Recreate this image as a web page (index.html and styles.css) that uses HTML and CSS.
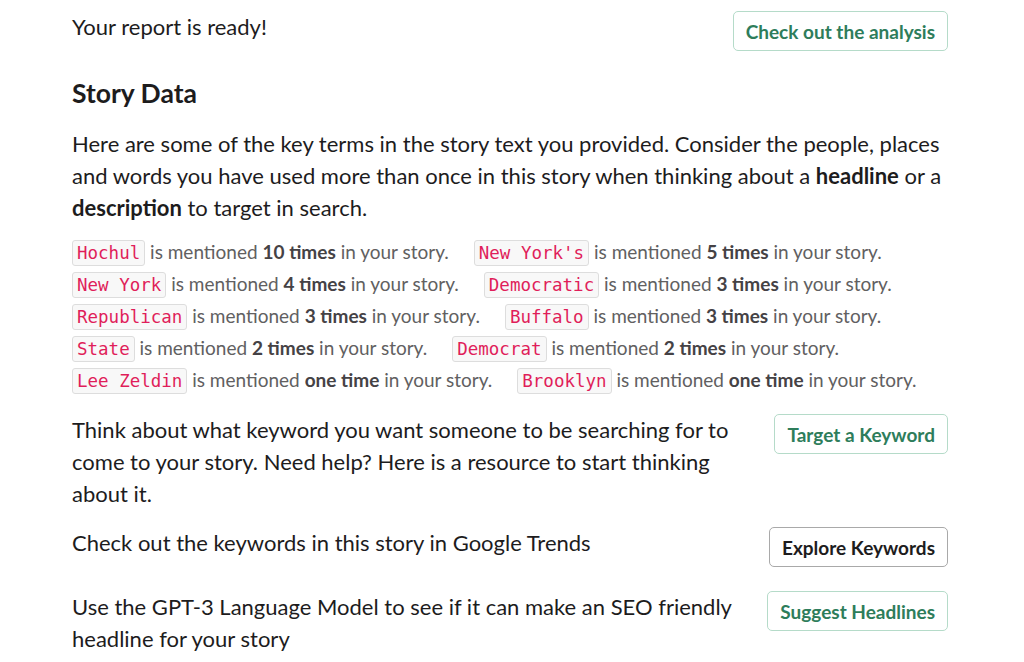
FILE: index.html
```html
<!DOCTYPE html>
<html lang="en">
<head>
  <meta charset="UTF-8" />
  <title>Story Report</title>
  <link rel="stylesheet" href="styles.css">
</head>
<body>
  <div class="report">
    <div class="row row-top">
      <div class="text">Your report is ready!</div>
      <button class="btn btn-green">Check out the analysis</button>
    </div>

    <h2 class="heading">Story Data</h2>

    <p class="intro">Here are some of the key terms in the story text you provided. Consider the people, places and words you have used more than once in this story when thinking about a <b>headline</b> or a <b>description</b> to target in search.</p>

    <div class="terms">
      <div class="term-row">
        <span><code>Hochul</code> is mentioned <b>10 times</b> in your story.</span>
        <span><code>New York's</code> is mentioned <b>5 times</b> in your story.</span>
      </div>
      <div class="term-row">
        <span><code>New York</code> is mentioned <b>4 times</b> in your story.</span>
        <span><code>Democratic</code> is mentioned <b>3 times</b> in your story.</span>
      </div>
      <div class="term-row">
        <span><code>Republican</code> is mentioned <b>3 times</b> in your story.</span>
        <span><code>Buffalo</code> is mentioned <b>3 times</b> in your story.</span>
      </div>
      <div class="term-row">
        <span><code>State</code> is mentioned <b>2 times</b> in your story.</span>
        <span><code>Democrat</code> is mentioned <b>2 times</b> in your story.</span>
      </div>
      <div class="term-row">
        <span><code>Lee Zeldin</code> is mentioned <b>one time</b> in your story.</span>
        <span><code>Brooklyn</code> is mentioned <b>one time</b> in your story.</span>
      </div>
    </div>

    <div class="row row-think">
      <div class="text narrow">Think about what keyword you want someone to be searching for to come to your story. Need help? Here is a resource to start thinking about it.</div>
      <button class="btn btn-green">Target a Keyword</button>
    </div>

    <div class="row row-trends">
      <div class="text narrow">Check out the keywords in this story in Google Trends</div>
      <button class="btn btn-plain">Explore Keywords</button>
    </div>

    <div class="row">
      <div class="text narrow">Use the GPT-3 Language Model to see if it can make an SEO friendly headline for your story</div>
      <button class="btn btn-green">Suggest Headlines</button>
    </div>
  </div>
</body>
</html>
```

FILE: styles.css
```css
body { margin: 0; background: #fff; font-family: Lato, "Noto Sans", sans-serif; color: #1d1c1d; }
.report { width: 876px; padding: 11px 0 0 72px; }

.row { display: flex; justify-content: space-between; align-items: flex-start; }
.text { font-size: 22px; line-height: 32px; }
.text.narrow { width: 665px; }
.row-top { margin-bottom: 26px; }
.row-think { margin-bottom: 17px; }
.row-trends { margin-bottom: 24px; }

.heading { margin: 0 0 19px; font-size: 26.5px; line-height: 32px; font-weight: 700; }
.intro { margin: 0 0 13px; font-size: 22px; line-height: 32px; }
.intro b { font-weight: 700; }

.terms { margin-bottom: 17px; color: #616061; font-size: 19px; }
.term-row { display: flex; gap: 25px; height: 32px; align-items: center; }
.term-row b { color: #454245; font-weight: 700; }
code {
  display: inline-block;
  font-family: "DejaVu Sans Mono", monospace;
  font-size: 17.5px;
  line-height: 24px;
  padding: 0 4px;
  color: #e01e5a;
  background: #f8f8f8;
  border: 1px solid #dddddd;
  border-radius: 3px;
}

.btn {
  flex: none;
  height: 40px;
  padding: 0 12px;
  background: #fff;
  border-radius: 5px;
  font-family: Lato, "Noto Sans", sans-serif;
  font-size: 19px;
  font-weight: 700;
  cursor: pointer;
}
.btn-green { color: #2e7d5b; border: 1px solid #b5dbc9; }
.btn-plain { color: #1d1c1d; border: 1px solid #a9a9a9; }
```
